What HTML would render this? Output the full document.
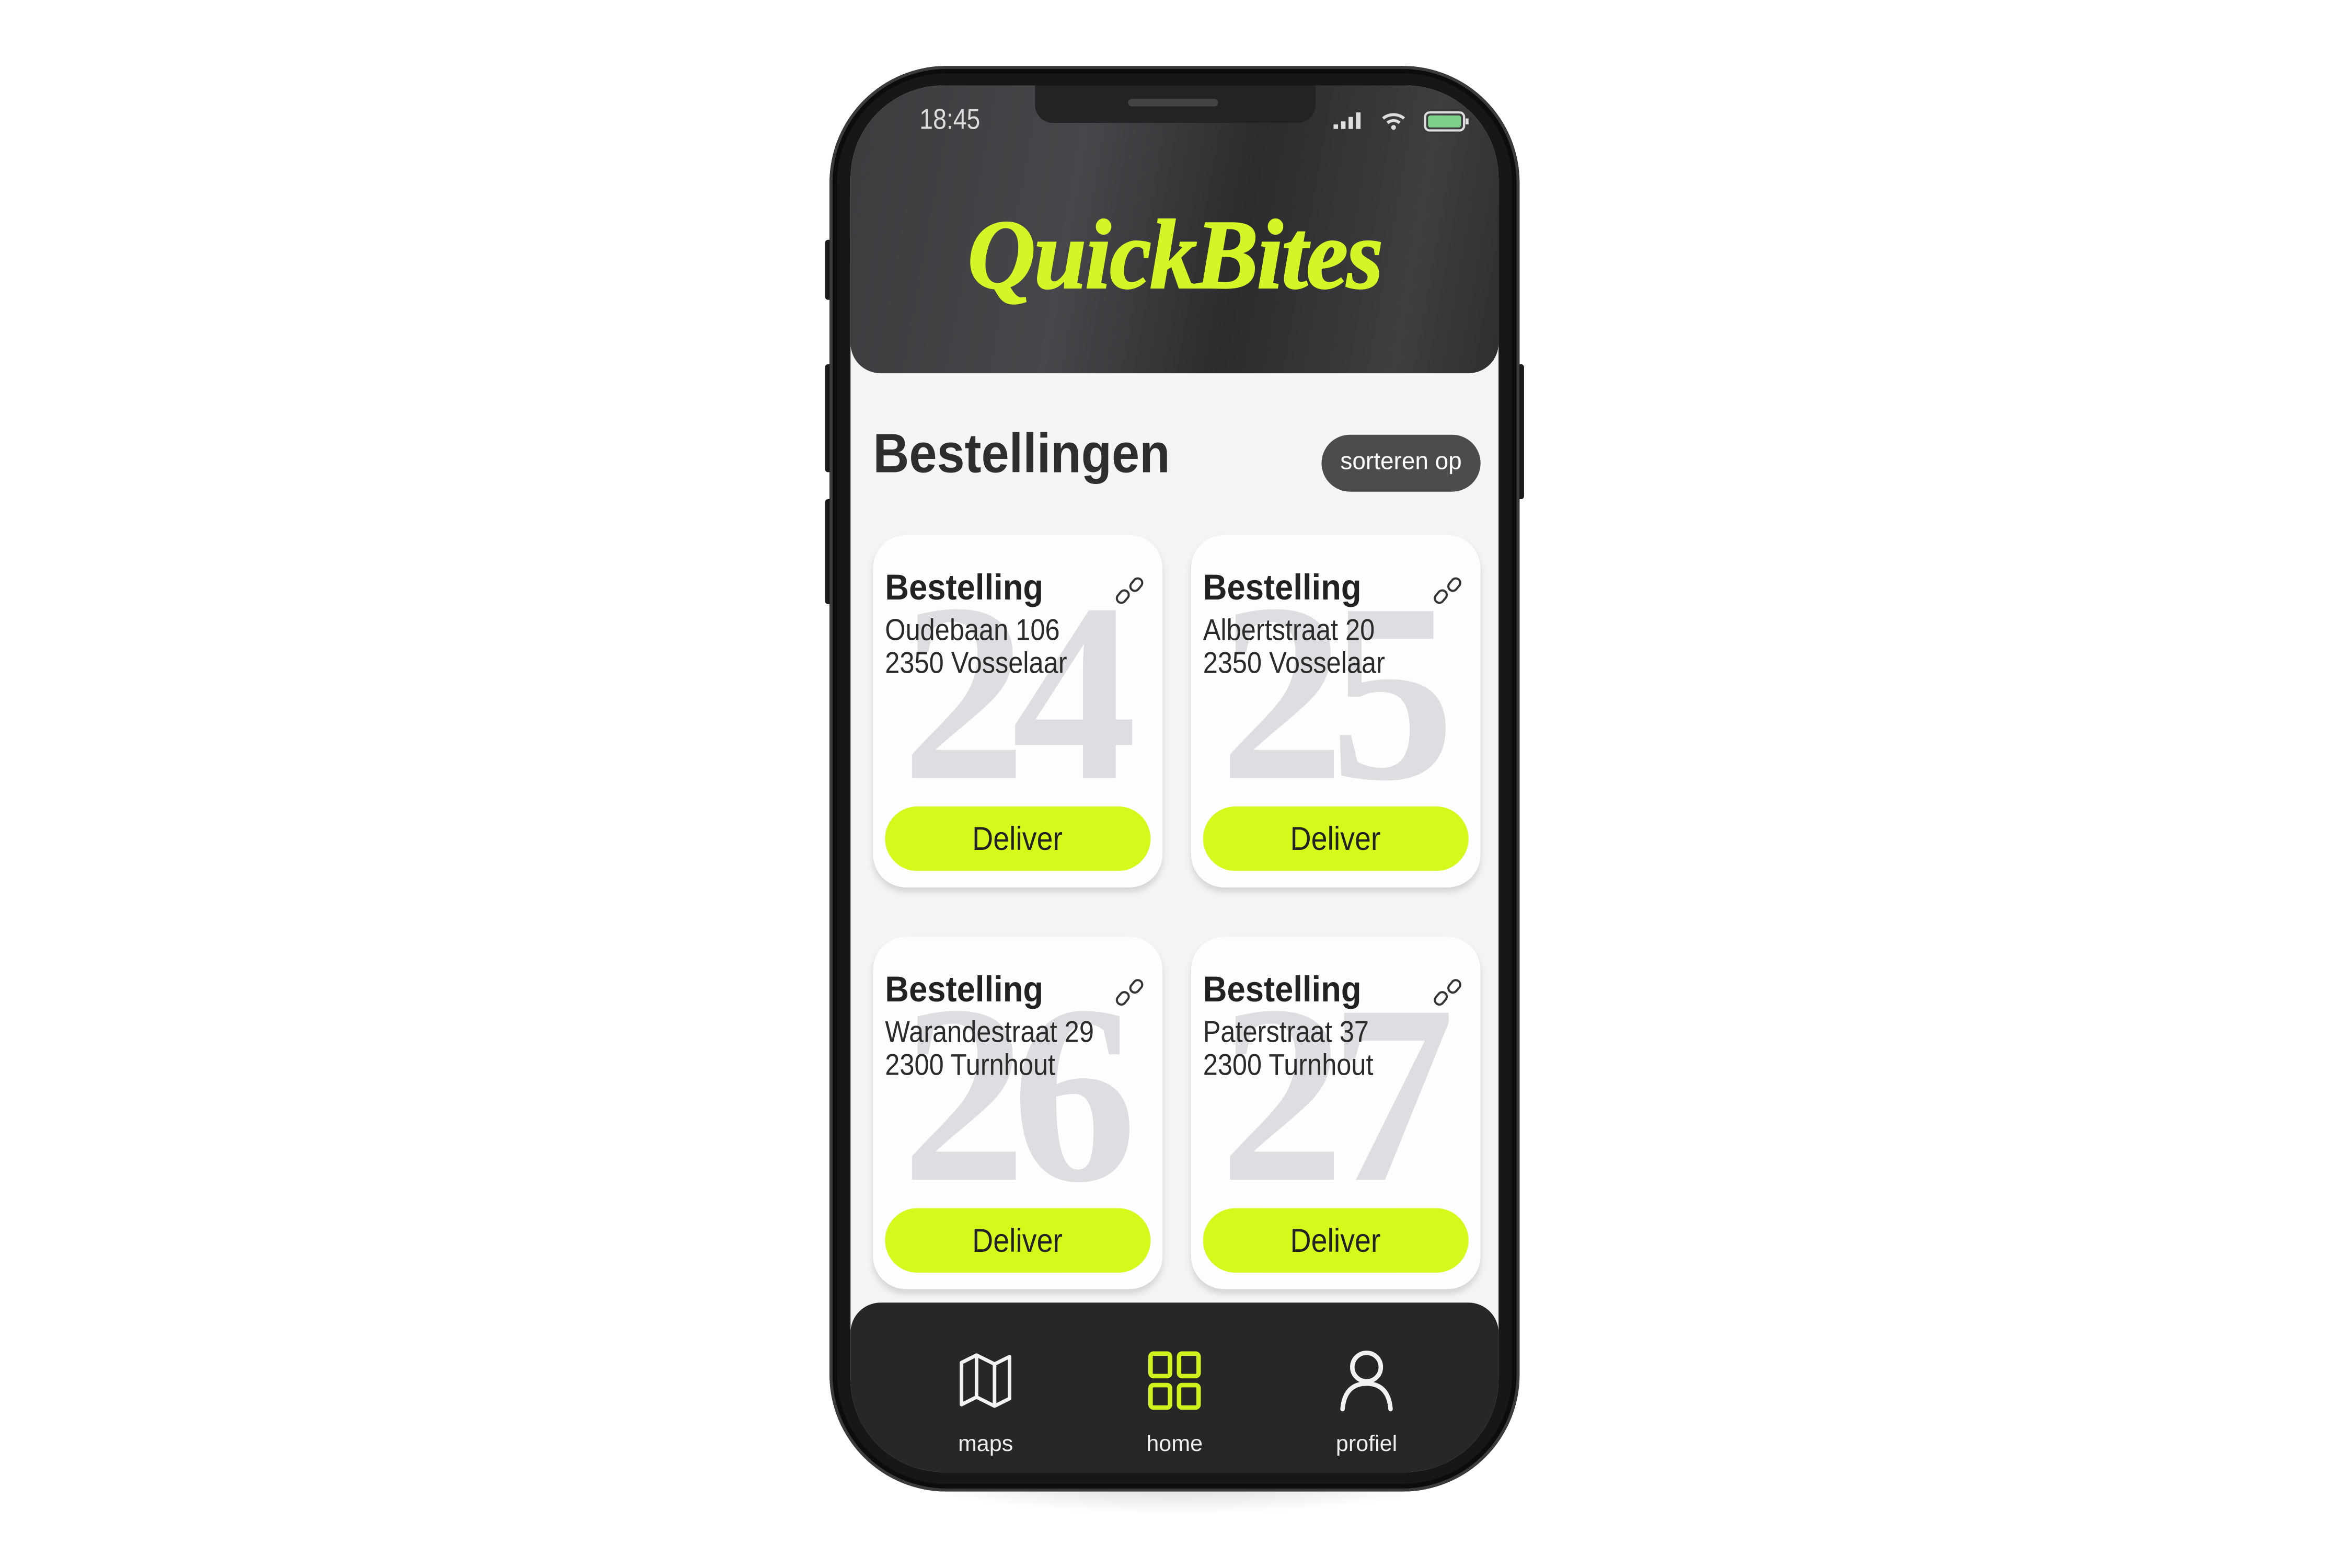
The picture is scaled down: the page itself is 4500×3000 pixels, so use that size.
<!DOCTYPE html>
<html><head><meta charset="utf-8"><style>
html,body{margin:0;padding:0;background:#fff;width:4500px;height:3000px;overflow:hidden}
#w{position:absolute;left:0;top:0;width:1568px;height:1046px;transform:scale(2.87,2.868);transform-origin:0 0;font-family:"Liberation Sans",sans-serif}
.a{position:absolute}
.shadow{left:600px;top:960px;width:370px;height:50px;border-radius:50%;background:radial-gradient(ellipse at center,rgba(0,0,0,.18),rgba(0,0,0,0) 70%)}
.phone{left:553px;top:44px;width:460px;height:951px;border-radius:78px;background:#161717;box-shadow:inset 0 0 0 2px #3a3b3c,inset 0 0 0 5px #0c0c0c}
.btn{background:#1a1a1a;border-radius:2px}
.screen{left:567px;top:57px;width:432px;height:925px;border-radius:62px;overflow:hidden;background:#f4f4f5}
.head{left:0;top:0;width:432px;height:192px;border-radius:0 0 20px 20px;background:linear-gradient(100deg,#3a3c3e 0%,#45474a 35%,#2b2c2d 60%,#3c3e40 85%,#2e2f30 100%)}
.notch{left:123px;top:0;width:187px;height:25px;background:#222324;border-radius:0 0 12px 12px}
.card{width:193px;height:235px;border-radius:22px;background:#fdfdfd;box-shadow:0 3px 4px rgba(0,0,0,.13);overflow:hidden}
.num{position:absolute;left:19px;top:20px;font-family:"Liberation Serif",serif;font-weight:bold;font-size:170px;line-height:1;color:#dddde2;letter-spacing:-10px;transform:scaleX(.98);transform-origin:0 0}
.tt{position:absolute;left:8px;top:22px;font-size:24px;font-weight:bold;color:#222;transform:scaleX(.92);transform-origin:0 0}
.ad{position:absolute;left:8px;top:53px;font-size:20px;line-height:22px;color:#2a2a2a;transform:scaleX(.88);transform-origin:0 0;white-space:nowrap}
.dl{position:absolute;left:8px;top:181px;width:177px;height:43px;border-radius:22px;background:#d4fa1c;text-align:center;line-height:43px;font-size:22px;color:#222;}
.dl span{display:inline-block;transform:scaleX(.88)}
.lk{position:absolute;left:161px;top:27px}
.nav{left:0;top:812px;width:432px;height:113px;background:#262727;border-radius:20px 20px 0 0}
.lbl{position:absolute;top:86px;font-size:15px;color:#eee;width:80px;text-align:center}
</style></head><body><div id="w">
<div class="a shadow"></div>
<div class="a btn" style="left:550px;top:160px;width:6px;height:40px"></div>
<div class="a btn" style="left:550px;top:243px;width:6px;height:72px"></div>
<div class="a btn" style="left:550px;top:333px;width:6px;height:70px"></div>
<div class="a btn" style="left:1010px;top:243px;width:6px;height:90px"></div>
<div class="a phone"></div>
<div class="a screen">
 <div class="a head"></div>
 <div class="a notch"><div class="a" style="left:62px;top:9px;width:60px;height:5px;border-radius:3px;background:#444"></div></div>
 <div class="a" style="left:46px;top:13px;font-size:19px;color:#ddd;transform:scaleX(.85);transform-origin:0 0">18:45</div>
 <svg class="a" style="left:321px;top:16px" width="92" height="16" viewBox="0 0 92 16">
  <rect x="1" y="10" width="3" height="3" fill="#ddd"/><rect x="6" y="8" width="3" height="5" fill="#ddd"/><rect x="11" y="5" width="3" height="8" fill="#ddd"/><rect x="16" y="2" width="3" height="11" fill="#ddd"/>
  <path d="M34 6a11 11 0 0 1 14 0M37 9a6 6 0 0 1 8 0" stroke="#ddd" stroke-width="2" fill="none"/><circle cx="41" cy="12" r="1.6" fill="#ddd"/>
  <rect x="62" y="2" width="26" height="12" rx="3" fill="none" stroke="#ddd" stroke-width="1.5"/><rect x="64" y="4" width="22" height="8" rx="1.5" fill="#7fd08a"/><rect x="89" y="6" width="2" height="4" fill="#ddd"/>
 </svg>
 <div class="a" style="left:78px;top:76px;font-family:'Liberation Serif',serif;font-style:italic;font-weight:bold;font-size:66px;color:#d2f626;transform:scaleX(.95);transform-origin:0 0;white-space:nowrap;letter-spacing:-1px;-webkit-text-stroke:1px #d2f626">QuickBites</div>
 <div class="a" style="left:15px;top:225px;font-size:37px;font-weight:bold;color:#2e2e2e;transform:scaleX(.9);transform-origin:0 0">Bestellingen</div>
 <div class="a" style="left:314px;top:233px;width:106px;height:38px;border-radius:19px;background:#4b4c4d;color:#fff;font-size:16px;text-align:center;line-height:38px">sorteren op</div>

 <div class="a card" style="left:15px;top:300px"><div class="num">24</div><div class="tt">Bestelling</div><div class="ad">Oudebaan 106<br>2350 Vosselaar</div><svg class="lk" width="20" height="20" viewBox="0 0 20 20" fill="none" stroke="#333" stroke-width="1.4"><rect x="1" y="11" width="9" height="6" rx="3" transform="rotate(-50 5.5 14)"/><rect x="10" y="3" width="9" height="6" rx="3" transform="rotate(-50 14.5 6)"/></svg><div class="dl"><span>Deliver</span></div></div>
 <div class="a card" style="left:227px;top:300px"><div class="num">25</div><div class="tt">Bestelling</div><div class="ad">Albertstraat 20<br>2350 Vosselaar</div><svg class="lk" width="20" height="20" viewBox="0 0 20 20" fill="none" stroke="#333" stroke-width="1.4"><rect x="1" y="11" width="9" height="6" rx="3" transform="rotate(-50 5.5 14)"/><rect x="10" y="3" width="9" height="6" rx="3" transform="rotate(-50 14.5 6)"/></svg><div class="dl"><span>Deliver</span></div></div>
 <div class="a card" style="left:15px;top:568px"><div class="num">26</div><div class="tt">Bestelling</div><div class="ad">Warandestraat 29<br>2300 Turnhout</div><svg class="lk" width="20" height="20" viewBox="0 0 20 20" fill="none" stroke="#333" stroke-width="1.4"><rect x="1" y="11" width="9" height="6" rx="3" transform="rotate(-50 5.5 14)"/><rect x="10" y="3" width="9" height="6" rx="3" transform="rotate(-50 14.5 6)"/></svg><div class="dl"><span>Deliver</span></div></div>
 <div class="a card" style="left:227px;top:568px"><div class="num">27</div><div class="tt">Bestelling</div><div class="ad">Paterstraat 37<br>2300 Turnhout</div><svg class="lk" width="20" height="20" viewBox="0 0 20 20" fill="none" stroke="#333" stroke-width="1.4"><rect x="1" y="11" width="9" height="6" rx="3" transform="rotate(-50 5.5 14)"/><rect x="10" y="3" width="9" height="6" rx="3" transform="rotate(-50 14.5 6)"/></svg><div class="dl"><span>Deliver</span></div></div>

 <div class="a nav">
  <svg class="a" style="left:72px;top:33px" width="36" height="38" viewBox="0 0 36 38" fill="none" stroke="#f2f2f2" stroke-width="2.4" stroke-linejoin="round"><path d="M2 7 L12 2 L24 8 L34 3 V31 L24 36 L12 30 L2 35 Z M12 2 V30 M24 8 V36"/></svg>
  <div class="lbl" style="left:50px">maps</div>
  <svg class="a" style="left:198px;top:32px" width="36" height="40" viewBox="0 0 36 40" fill="none" stroke="#cdf21c" stroke-width="3"><rect x="2" y="2" width="13" height="15" rx="2"/><rect x="21" y="2" width="13" height="15" rx="2"/><rect x="2" y="23" width="13" height="15" rx="2"/><rect x="21" y="23" width="13" height="15" rx="2"/></svg>
  <div class="lbl" style="left:176px">home</div>
  <svg class="a" style="left:325px;top:31px" width="38" height="42" viewBox="0 0 38 42" fill="none" stroke="#f2f2f2" stroke-width="3" stroke-linecap="round"><circle cx="19" cy="12" r="9.5"/><path d="M3 40 C4 28 10 23 19 23 C28 23 34 28 35 40"/></svg>
  <div class="lbl" style="left:304px">profiel</div>
 </div>
</div>
</div></body></html>
